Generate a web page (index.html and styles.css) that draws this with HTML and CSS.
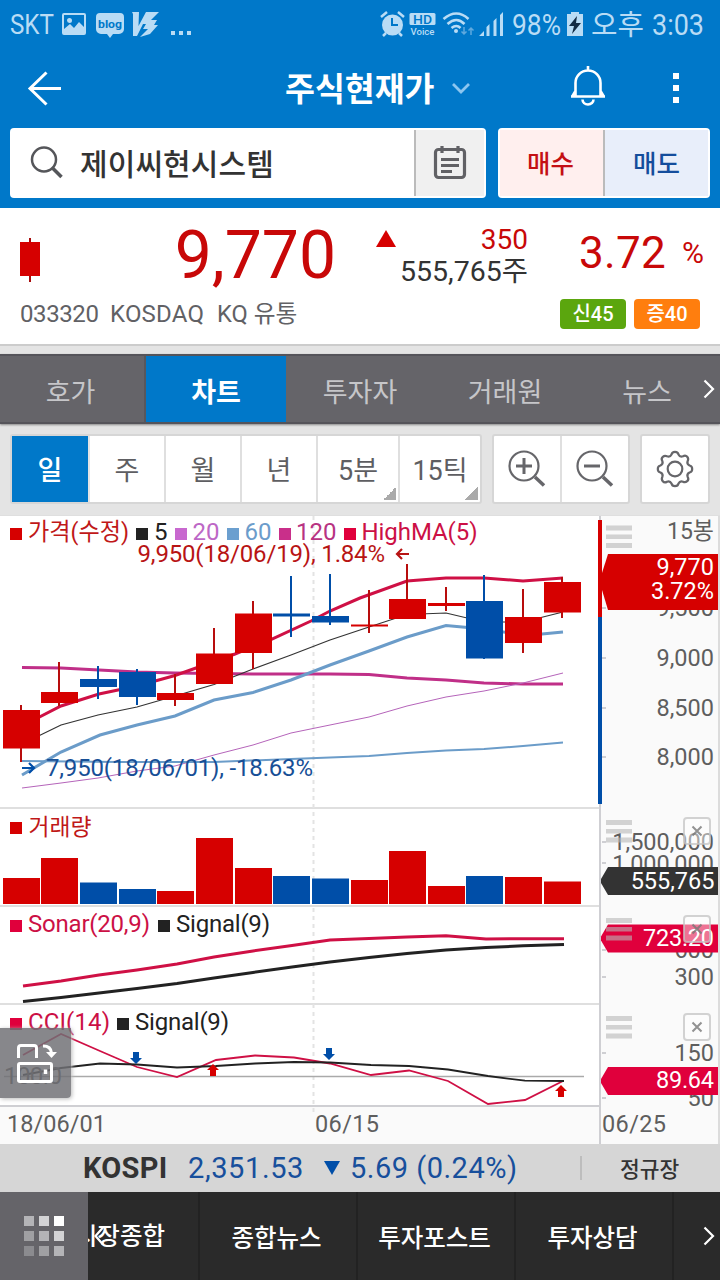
FILE: index.html
```html
<!DOCTYPE html>
<html lang="ko">
<head>
<meta charset="utf-8">
<title>주식현재가</title>
<link rel="stylesheet" href="styles.css">
</head>
<body>
<div class="app">
  <header class="header">
    <div class="status">
      <svg class="status-left" width="200" height="48" viewBox="0 0 200 48">
        <text x="10" y="34" font-size="27" textLength="44" lengthAdjust="spacingAndGlyphs">SKT</text>
        <path fill-rule="evenodd" d="M64 13h20a2 2 0 0 1 2 2v18a2 2 0 0 1-2 2H64a2 2 0 0 1-2-2V15a2 2 0 0 1 2-2zm0 2v14l6-5 4 4 5-6 5 5V15zM69.500 18a2.500 2.500 0 1 1 0 5 2.500 2.500 0 0 1 0-5z"/>
        <path d="M100 13h20a4 4 0 0 1 4 4v12a5 5 0 0 1-5 5h-6l-3 4-3-4h-6a5 5 0 0 1-5-5V17a4 4 0 0 1 4-4z"/>
        <text class="blog" x="98" y="28" font-size="11.500" textLength="24" lengthAdjust="spacingAndGlyphs">blog</text>
        <path d="M132 12h7l-.5 14 7.500-14h13l-8 8h6l-3 5h4l-8 9-10 3 8-8h-5l3-5h-3l-6 12h-4l0-22z"/>
        <path d="M171 31h4v4h-4zM179 31h4v4h-4zM187 31h4v4h-4z"/>
      </svg>
      <svg class="status-right" width="340" height="48" viewBox="380 0 340 48">
        <circle cx="392.500" cy="25" r="10.500"/>
        <path d="M381 17l6-5M404 17l-6-5M386 33l-3 3M399 33l3 3" stroke="#b9dcf5" stroke-width="2.500" fill="none"/>
        <path d="M392 18v7h6" stroke="#0078c9" stroke-width="2" fill="none"/>
        <rect x="409.500" y="13" width="26" height="12" rx="1.500"/>
        <text class="hd" x="413" y="23.500" font-size="12" textLength="19" lengthAdjust="spacingAndGlyphs">HD</text>
        <text x="410.500" y="35" font-size="9.500" font-weight="500" textLength="24" lengthAdjust="spacingAndGlyphs">Voice</text>
        <g fill="none" stroke="#b9dcf5" stroke-width="2.600"><path d="M443.500 19q13-11 25 0M447.500 24q9-8 17 0M451.500 28q5-4 9 0"/></g>
        <circle cx="456" cy="31" r="2"/>
        <path d="M464 27v7m-2.500-2.500l2.500 2.500 2.500-2.500M471 35v-7m-2.500 2.500l2.500-2.500 2.500 2.500" fill="none" stroke="#5fa9de" stroke-width="1.500"/>
        <path d="M479 36l5-5v5zM486.500 27l3-3v12h-3zM493.500 21l3-3v18h-3zM500 15l3-3v24h-3z"/>
        <text x="512" y="35" font-size="30" textLength="49" lengthAdjust="spacingAndGlyphs">98%</text>
        <path d="M567 14h4v-2h8v2h4v22h-16z"/><path d="M577 16l-8 10h5l-2 8 9-11h-5z" fill="#122b44"/>
        <text x="591" y="35" font-size="28" textLength="53" lengthAdjust="spacingAndGlyphs">오후</text>
        <text x="652" y="35" font-size="30" textLength="52" lengthAdjust="spacingAndGlyphs">3:03</text>
      </svg>
    </div>
    <div class="titlebar">
      <svg class="back" width="36" height="36" viewBox="0 0 36 36"><path d="M20.500 2.500L4 18.500l16.500 16M4 18.500h31"/></svg>
      <h1 class="title"><span>주식현재가</span><svg width="20" height="14" viewBox="0 0 20 14"><path d="M2 3l8 8 8-8"/></svg></h1>
      <svg class="bell" width="36" height="42" viewBox="0 0 36 42"><path d="M18 1v4M5.500 31V18a12.500 12.500 0 0 1 25 0v13M1 31.500h34M5.500 26l-3 5M30.500 26l3 5M12.500 34.500a5.500 5 0 0 0 11 0"/></svg>
      <div class="more"><i></i><i></i><i></i></div>
    </div>
    <div class="searchrow">
      <div class="search">
        <div class="field">
          <svg width="34" height="34" viewBox="0 0 34 34"><circle cx="14" cy="13.500" r="12"/><path d="M22.500 22l9 9" stroke-width="3.500"/></svg>
          <span>제이씨현시스템</span>
        </div>
        <div class="note">
          <svg width="34" height="36" viewBox="0 0 34 36"><rect x="2.500" y="4.500" width="29" height="28" rx="3"/><path d="M9 1v7M25 1v7M8 14.500h18M8 20.500h18M8 26.500h11"/></svg>
        </div>
      </div>
      <div class="trade"><span class="buy">매수</span><span class="sell">매도</span></div>
    </div>
  </header>

  <section class="quote">
    <div class="quote-main">
      <svg class="mini" width="20" height="44" viewBox="0 0 20 44"><path d="M0 4h20v34H0z" fill="#d60000"/><path d="M9 0h2v4H9zM9 38h2v6H9z" fill="#a80c0c"/></svg>
      <strong class="price">9,770</strong>
      <svg class="up" width="20" height="17" viewBox="0 0 20 17"><path d="M10 0l10 17H0z" fill="#d60000"/></svg>
      <div class="change"><span class="diff">350</span><span class="vol">555,765주</span></div>
      <span class="pct">3.72</span><span class="pct-sign">%</span>
    </div>
    <div class="quote-sub">
      <span class="code">033320</span><span class="market">KOSDAQ</span><span class="kind">KQ 유통</span>
      <span class="badge green">신45</span><span class="badge orange">증40</span>
    </div>
  </section>

  <nav class="tabs">
    <span>호가</span><span class="on">차트</span><span>투자자</span><span>거래원</span><span>뉴스</span>
    <svg width="12" height="20" viewBox="0 0 12 20"><path d="M1.500 1.500l8.500 8.500-8.500 8.500"/></svg>
  </nav>

  <div class="toolbar">
    <div class="group periods">
      <span class="on">일</span><span>주</span><span>월</span><span>년</span><span class="wide drop">5분</span><span class="wide drop">15틱</span>
    </div>
    <div class="group zooms">
      <span><svg width="38" height="38" viewBox="0 0 38 38"><circle cx="16" cy="16" r="14.500"/><path d="M27 27l9 8.500" stroke-width="3.500"/><path d="M8 16h16M16 8v16" stroke-width="3"/></svg></span>
      <span><svg width="38" height="38" viewBox="0 0 38 38"><circle cx="16" cy="16" r="14.500"/><path d="M27 27l9 8.500" stroke-width="3.500"/><path d="M8 16h16" stroke-width="3"/></svg></span>
    </div>
    <div class="group gear">
      <svg width="38" height="38" viewBox="-19 -19 38 38"><circle r="7.300"/><path d="M-3.500-14.500Q-3-17.200 0-17.200T3.500-14.500Q5-11.500 8-12.700Q10.500-14.200 12.200-12.200T12.700-8Q11.500-5 14.500-3.500Q17.200-3 17.200 0T14.500 3.500Q11.500 5 12.700 8Q14.200 10.500 12.200 12.200T8 12.700Q5 11.500 3.500 14.500Q3 17.200 0 17.200T-3.500 14.500Q-5 11.500-8 12.700Q-10.500 14.200-12.200 12.200T-12.700 8Q-11.500 5-14.500 3.500Q-17.200 3-17.200 0T-14.500-3.500Q-11.500-5-12.700-8Q-14.200-10.500-12.200-12.200T-8-12.700Q-5-11.500-3.500-14.500z"/></svg>
    </div>
  </div>

  <section class="chart">
    <svg class="plot" width="720" height="629" viewBox="0 515 720 629">
      <defs>
        <g id="grip" fill="#b8b8b8" fill-opacity=".6"><path d="M606 0h26v5h-26zM606 9h26v4.500h-26zM606 17.500h26v5h-26z"/></g>
        <g id="close"><rect x="684" y="1" width="26" height="26" rx="3" fill="#fff" fill-opacity=".45" stroke="#c4c4c4" stroke-opacity=".75" stroke-width="2"/><path d="M692.500 9.500l9 9m0-9l-9 9" stroke="#777" stroke-opacity=".8" stroke-width="2"/></g>
        <path id="tag" d="M608 0h110v28H608l-7-12v-4z"/>
        <path id="down" d="M-3 0h6v6h3L0 12l-6-6h3z" fill="#004ea8"/>
        <path id="rise" d="M-3 12h6V6h3L0 0l-6 6h3z" fill="#d60000"/>
      </defs>

      <!-- panels, dividers and axis -->
      <path d="M0 515h720v629H0z" fill="#fff"/>
      <path d="M601 516h117v628H601zM0 1106h718v38H0z" fill="#fafafa"/>
      <path d="M0 515h720M0 808h600M0 906h600M0 1004h600" stroke="#dfdfdf" stroke-width="2"/>
      <path d="M0 1106h600M600 516v628" stroke="#cfcfd3" stroke-width="2"/>
      <path d="M719 516v628" stroke="#dcdcdc" stroke-width="2"/>
      <path d="M602 608h4M602 658h4M602 708h4M602 757h4M602 842h4M602 863h4M602 950h4M602 977h4M602 1053h4M602 1098h4" stroke="#cfcfd3" stroke-width="2"/>
      <path d="M313.500 516v598" stroke="#e3e3e3" stroke-width="2" stroke-dasharray="4 4"/>

      <!-- moving averages -->
      <g fill="none">
        <path d="M22 667.500L61 668 137 672 175 673 253 674 330 674 369 674.500 407 678 446 680 484 683 523 684 563 684" stroke="#c02f88" stroke-width="3"/>
        <path d="M22 788L61 783 98 778 137 771 175 766 214 755 253 745 291 733 330 725 369 717 407 706 446 697 484 691 523 683 563 673" stroke="#b564ba" stroke-width="1"/>
        <path d="M22 761L120 762 214 762 291 759 369 756 407 753 446 750.500 484 749 523 746 563 742.500" stroke="#6b9cc9" stroke-width="2"/>
        <path d="M22 775L61 752 100 735 137 725 175 716 214 700 253 692.500 291 680 330 665 369 651 407 637 446 625.500 484 629 523 635 542 634 563 632" stroke="#6b9cc9" stroke-width="3"/>
        <path d="M22 744L61 725 98 715 137 707 175 696 214 684.500 253 669 291 655 330 640 369 627 407 614.500 446 613 484 622 523 622 563 612" stroke="#333" stroke-width="1.200"/>
        <path d="M22 726L61 706 99 694 137 686 175 675.500 196 668 235 654 272 639 311 621 330 611 360 598 407 581 446 578 484 578 523 581 563 578" stroke="#cf1045" stroke-width="3"/>
      </g>

      <!-- candles -->
      <g fill="#d60000">
        <path fill="#b80d0d" d="M20 705h2v57h-2zM58 662h2v44h-2zM174 674h2v32h-2zM213 628h2v56h-2zM252 601h2v68h-2zM368 590h2v43h-2zM406 564h2v55h-2zM445 587h2v24h-2zM522 589h2v64h-2zM561 577h2v41h-2z"/>
        <path d="M3 710h37v38.500H3zM41 692h37v11H41zM157 693h37v7h-37zM196 653.500h37V684h-37zM235 613.500h37V653h-37zM351 624.500h37v2h-37zM389 599h37v20h-37zM428 603h37v3h-37zM505 617h37v26h-37zM544 582h37v30.500h-37z"/>
      </g>
      <path fill="#004ea8" d="M80 679h37v8H80zM119 672h37v25h-37zM273 613.500h37v3h-37zM312 616h37v6.500h-37zM466 601h37v57.500h-37zM97 666h2v33h-2zM136 669h2v36h-2zM290 576h2v61h-2zM329 574h2v51h-2zM483 575h2v84h-2z"/>

      <path d="M598 520h4v97h-4z" fill="#d60000"/><path d="M598 617h4v187h-4z" fill="#004ea8"/>

      <!-- price legend -->
      <path d="M10 528h12v12H10z" fill="#d60000"/><path d="M136 528h12v12h-12z" fill="#222"/><path d="M175 528h12v12h-12z" fill="#c868cf"/><path d="M227 528h12v12h-12z" fill="#6b9fcf"/><path d="M279 528h12v12h-12z" fill="#c92f8a"/><path d="M344 528h12v12h-12z" fill="#e0003c"/>
      <g font-size="24">
        <text x="28" y="540" fill="#c01818" textLength="101" lengthAdjust="spacingAndGlyphs">가격(수정)</text>
        <text x="154" y="540" fill="#222">5</text>
        <text x="192.500" y="540" fill="#bd68c6" textLength="27">20</text>
        <text x="244.500" y="540" fill="#6b9ccb" textLength="27">60</text>
        <text x="296" y="540" fill="#b83382" textLength="40.500">120</text>
        <text x="361.500" y="540" fill="#cc1045" textLength="116">HighMA(5)</text>
        <text x="137.500" y="562" fill="#b81414" textLength="247.500">9,950(18/06/19), 1.84%</text>
        <text x="46" y="776" fill="#174f96" textLength="267">7,950(18/06/01), -18.63%</text>
      </g>
      <path d="M409 554h-12m5-5l-5 5 5 5" fill="none" stroke="#b81414" stroke-width="2.200"/>
      <path d="M22 768h12m-5-5l5 5-5 5" fill="none" stroke="#004ea8" stroke-width="2.200"/>

      <!-- volume -->
      <path d="M10 822h12v12H10z" fill="#d60000"/>
      <text x="28.500" y="834.500" font-size="23" fill="#c01818" textLength="63" lengthAdjust="spacingAndGlyphs">거래량</text>
      <path fill="#d60000" d="M3 878h37v26H3zM41 858h37v46H41zM157 891h37v13h-37zM196 838h37v66h-37zM235 868h37v36h-37zM351 880h37v24h-37zM389 851h37v53h-37zM428 886h37v18h-37zM505 877h37v27h-37zM544 881.500h37V904h-37z"/>
      <path fill="#004ea8" d="M80 882.500h37V904H80zM119 889h37v15h-37zM273 876h37v28h-37zM312 878.500h37V904h-37zM466 876h37v28h-37z"/>

      <!-- sonar and cci -->
      <path d="M10 920h12v12H10zM10 1018h12v12H10z" fill="#e0003c"/><path d="M158 920h12v12h-12zM117 1018h12v12h-12z" fill="#222"/>
      <g font-size="24">
        <text x="28" y="932" fill="#cc1045" textLength="122">Sonar(20,9)</text><text x="176" y="932" fill="#222" textLength="94">Signal(9)</text>
        <text x="28" y="1030" fill="#cc1045" textLength="82">CCI(14)</text><text x="135" y="1030" fill="#222" textLength="94">Signal(9)</text>
      </g>
      <g fill="none">
        <path d="M23 986L61 981 99 975 137 970 177 964 214 957 253 951 292 945.500 330 940 369 938.500 407 937 446 935.700 486 939 523 938.700 564 938.700" stroke="#cf1045" stroke-width="3"/>
        <path d="M23 1001.500L61 997.500 99 993 137 988.500 177 983.500 214 978 253 972.500 292 967 330 962 369 957.500 407 953.500 446 950 486 947.500 523 945.800 564 944.500" stroke="#222" stroke-width="3"/>
        <path d="M4 1076.500h580" stroke="#aaa" stroke-width="1.500"/>
        <path d="M23 1055L61 1034 100 1051 137 1067 177 1077 216 1060 255 1055.500 294 1057.500 330 1063.500 371 1075 409 1070.500 448 1081 488 1104 525 1100 563 1081" stroke="#cf1045" stroke-width="1.800"/>
        <path d="M23 1075L61 1068 100 1063.500 137 1064.500 177 1067.500 216 1066 255 1063.500 294 1062 330 1062.500 371 1065 409 1066 448 1069.500 488 1076 525 1080.700 564 1081" stroke="#222" stroke-width="1.800"/>
      </g>
      <use href="#down" x="136" y="1052"/><use href="#down" x="329" y="1048"/><use href="#rise" x="213" y="1064"/><use href="#rise" x="561" y="1085"/>
      <text x="4" y="1084" font-size="24" fill="#555" textLength="58">100.0</text>

      <!-- axis labels -->
      <g font-size="23.500" fill="#5e5e5e">
        <text x="667" y="538.500" textLength="47" lengthAdjust="spacingAndGlyphs">15봉</text>
        <g text-anchor="end">
          <text x="714" y="616">9,500</text><text x="714" y="666">9,000</text><text x="714" y="715.500">8,500</text><text x="714" y="765">8,000</text>
          <text x="714" y="850">1,500,000</text><text x="714" y="871.500">1,000,000</text>
          <text x="714" y="958">600</text><text x="714" y="984.500">300</text><text x="714" y="1061">150</text><text x="714" y="1106">50</text>
        </g>
        <text x="7" y="1132" textLength="99">18/06/01</text><text x="315" y="1132" textLength="64">06/15</text><text x="602" y="1132" textLength="64">06/25</text>
      </g>
      <path d="M608 554h110v56H608l-6-20v-17z" fill="#d60000"/>
      <use href="#tag" y="867" fill="#333"/><use href="#tag" y="924.500" fill="#e0003c"/><use href="#tag" y="1067" fill="#e0003c"/>
      <g font-size="23.500" fill="#fff" text-anchor="end">
        <text x="714" y="575">9,770</text><text x="714" y="599">3.72%</text><text x="714.500" y="889">555,765</text><text x="714" y="946" textLength="71">723.20</text><text x="714" y="1088" textLength="58">89.64</text>
      </g>
      <use href="#grip" y="525.500"/><use href="#grip" y="820"/><use href="#grip" y="918"/><use href="#grip" y="1016"/>
      <use href="#close" y="817"/><use href="#close" y="915"/><use href="#close" y="1013"/>
    </svg>
    <div class="rotate">
      <svg width="40" height="40" viewBox="0 0 40 40" fill="none" stroke="#fff"><rect x="1.500" y="19.500" width="33" height="18" rx="1.500" stroke-width="3"/><path d="M1.500 14V4q0-2.500 2.500-2.500h13q2.500 0 2.500 2.500v10" stroke-width="3"/><path d="M28.500 25.500v4.500" stroke-width="3.500"/><path d="M26 2q8 0 8.500 7" stroke-width="3"/><path d="M29 8h11l-5.500 6z" fill="#fff" stroke="none"/></svg>
    </div>
  </section>

  <div class="index">
    <strong>KOSPI</strong><span class="value">2,351.53</span>
    <svg width="16" height="14" viewBox="0 0 16 14"><path d="M0 0h16L8 14z" fill="#004ea8"/></svg>
    <span class="delta">5.69 (0.24%)</span><span class="session">정규장</span>
  </div>

  <nav class="bottom">
    <div class="menu"><i></i><i></i><i></i><i></i><i></i><i></i><i></i><i></i><i></i></div>
    <div class="link first"><svg width="10" height="20" viewBox="0 0 10 20"><path d="M9 1.500L1.500 10 9 18.500"/></svg><span>시장종합</span></div>
    <div class="link">종합뉴스</div><div class="link">투자포스트</div><div class="link">투자상담</div>
    <div class="next"><svg width="12" height="20" viewBox="0 0 12 20"><path d="M1.500 1.500L10 10l-8.500 8.500"/></svg></div>
  </nav>
</div>
</body>
</html>
```
FILE: styles.css
```css
* { box-sizing: border-box; }
body { margin: 0; font-family: Roboto, "Noto Sans CJK KR", sans-serif; background: #e4e4e4; }
svg { display: block; flex: none; }
i { display: block; }
.app { width: 720px; height: 1280px; overflow: hidden; display: flex; flex-direction: column; }

.header { height: 208px; background: #0078c9; display: flex; flex-direction: column; }
.status { height: 48px; display: flex; justify-content: space-between; fill: #b9dcf5; }
.blog { fill: #0078c9; font-weight: 700; }
.hd { fill: #0078c9; font-weight: 500; }

.titlebar { height: 80px; display: flex; align-items: center; padding: 0 41px 0 26px; }
.back, .bell { fill: none; stroke: #fff; stroke-width: 3; }
.bell { stroke-width: 2.600; margin-bottom: 4px; }
.title { flex: 1; display: flex; align-items: center; margin: 0 0 0 223px; font-size: 32.500px; line-height: 40px; font-weight: 700; color: #fff; white-space: nowrap; }
.title span { padding-top: 4px; }
.title svg { margin-left: 16px; fill: none; stroke: #8cc6f0; stroke-width: 2.800; }
.more { margin-left: 67px; display: flex; flex-direction: column; gap: 6px; }
.more i { width: 6px; height: 6px; background: #fff; }

.searchrow { display: flex; gap: 12px; padding: 0 10px; height: 70px; }
.search { width: 476px; display: flex; background: #fff; border-radius: 4px; overflow: hidden; }
.field { width: 402px; display: flex; align-items: center; padding-left: 20px; gap: 16px; font-size: 30px; letter-spacing: .1px; line-height: 40px; color: #333; white-space: nowrap; }
.field span { padding-top: 4px; font-weight: 500; }
.field svg { fill: none; stroke: #55565a; stroke-width: 2.500; }
.note { flex: 1; margin: 2px; padding-right: 1px; background: #f0f0f0; border-left: 2px solid #bbb; display: flex; align-items: center; justify-content: center; }
.note svg { fill: none; stroke: #616165; stroke-width: 3.200; }
.trade { width: 212px; display: flex; background: #fff; border-radius: 4px; padding: 2px; font-size: 25.500px; font-weight: 500; text-align: center; line-height: 68px; }
.trade span { width: 104px; }
.trade .buy { width: 106px; padding-right: 2px; background: #ffefee; color: #c40f14; border-right: 2px solid #bbb; }
.sell { background: #e8eefa; color: #144d9c; }

.quote { height: 138px; background: #fff; border-bottom: 2px solid #ccc; }
.quote-main { height: 86px; display: flex; align-items: center; padding: 14px 0 0 20px; color: #c80808; }
.mini { margin-top: 4px; }
.price { width: 296px; text-align: right; font-size: 66px; font-weight: 400; line-height: 70px; margin-top: -4px; }
.up { margin: -40px 0 0 40px; }
.change { width: 132px; display: flex; flex-direction: column; margin-top: -5px; text-align: right; font-size: 28px; line-height: 32px; white-space: nowrap; }
.vol { color: #333; font-size: 28.500px; line-height: 31px; }
.pct { width: 138px; text-align: right; font-size: 44px; line-height: 50px; margin-top: -11px; letter-spacing: .3px; }
.pct-sign { width: 38px; text-align: right; font-size: 30px; line-height: 40px; margin-top: -11px; }
.quote-sub { height: 38px; display: flex; align-items: center; padding: 1px 20px 0; font-size: 24px; line-height: 38px; color: #616165; white-space: nowrap; }
.code { width: 90px; letter-spacing: -.4px; }
.market { width: 107px; letter-spacing: .2px; }
.kind { width: 343px; font-size: 23.700px; }
.badge { width: 66px; height: 30px; line-height: 31px; border-radius: 4px; text-align: center; font-size: 20px; font-weight: 500; color: #fff; }
.green { background: #5ba60e; }
.orange { background: #ff7e0e; margin-left: 8px; }

.tabs { height: 70px; margin-top: 8px; background: #656469; border-top: 2px solid #55545a; border-bottom: 2px solid #55545a; display: flex; align-items: center; font-size: 27px; text-align: center; color: #c6c6c9; box-shadow: 0 1px 2px #888; white-space: nowrap; }
.tabs span { width: 144px; height: 66px; padding-top: 4px; line-height: 66px; }
.tabs span:first-child { width: 146px; padding-right: 3px; border-right: 2px solid #58575c; }
.tabs .on { width: 140px; background: #0078c9; color: #fff; font-weight: 700; }
.tabs span:nth-child(3) { width: 148px; }
.tabs span:nth-child(4) { width: 142px; }
.tabs span:nth-child(5) { width: 127px; padding-left: 15px; }
.tabs svg, .next svg, .first svg { fill: none; stroke: #fff; stroke-width: 2.200; }

.toolbar { height: 91px; padding: 10px 10px 0; display: flex; gap: 10px; }
.group { height: 70px; display: flex; background: #fff; border: 2px solid #d6d6d6; border-radius: 3px; color: #5e5e62; }
.group svg { fill: none; stroke: #66666a; stroke-width: 2.200; }
.periods { width: 472px; font-size: 27px; line-height: 68px; text-align: center; }
.periods span { width: 76px; padding-top: 1px; border-right: 2px solid #dfdfdf; }
.periods .on { width: 78px; background: #0078c9; color: #fff; border-right: 2px solid #e4e4e4; font-weight: 500; }
.periods .wide { width: 82px; }
.periods .wide:last-child { width: 80px; border-right: 0; }
.drop { background: linear-gradient(135deg, transparent 50%, #aaa 50%) right 2px bottom 2px / 13px 13px no-repeat; }
.zooms { width: 138px; }
.zooms span { flex: 1; display: flex; justify-content: center; align-items: center; }
.zooms span + span { border-left: 2px solid #dfdfdf; }
.gear { width: 70px; align-items: center; justify-content: center; }

.chart { position: relative; height: 629px; }
.rotate { position: absolute; left: 0; top: 513px; width: 71px; height: 70px; background: rgba(112, 112, 117, .84); border-radius: 0 0 4px 0; box-shadow: 1px 1px 4px #bbb; padding: 16px 0 0 17px; }

.index { height: 48px; background: #d6d6d6; display: flex; align-items: center; padding-left: 83px; font-size: 29px; line-height: 50px; color: #174f9c; white-space: nowrap; }
.index strong { width: 105px; color: #333; font-weight: 700; letter-spacing: .3px; }
.value { width: 136px; letter-spacing: .6px; }
.delta { width: 230px; margin-left: 10px; letter-spacing: .5px; }
.session { height: 24px; border-left: 2px solid #bdbdbd; padding-left: 38px; color: #333; font-size: 21.500px; line-height: 27px; font-weight: 500; }

.bottom { height: 88px; background: #2a2a2a; display: flex; color: #fff; font-size: 24.500px; font-weight: 500; line-height: 93px; text-align: center; white-space: nowrap; }
.menu { width: 88px; padding: 24px; background: #656469; display: grid; grid-template-columns: repeat(3, 10px); grid-auto-rows: 10px; gap: 5px; }
.menu i { background: #b4b4b7; }
.menu i:nth-child(2), .menu i:nth-child(6) { background: #d3d3d5; }
.menu i:nth-child(3) { background: #fff; }
.menu i:nth-child(4) { background: #a0a0a3; }
.menu i:nth-child(7) { background: #8b8b8f; }
.menu i:nth-child(8) { background: #a0a0a3; }
.link { width: 158px; padding-right: 3px; border-right: 2px solid #222; }
.first { width: 112px; display: flex; justify-content: flex-end; align-items: center; padding-right: 33px; overflow: hidden; }
.first svg { margin-right: -14px; position: relative; left: 15px; }
.next { flex: 1; display: flex; align-items: center; padding-left: 29px; }
```
